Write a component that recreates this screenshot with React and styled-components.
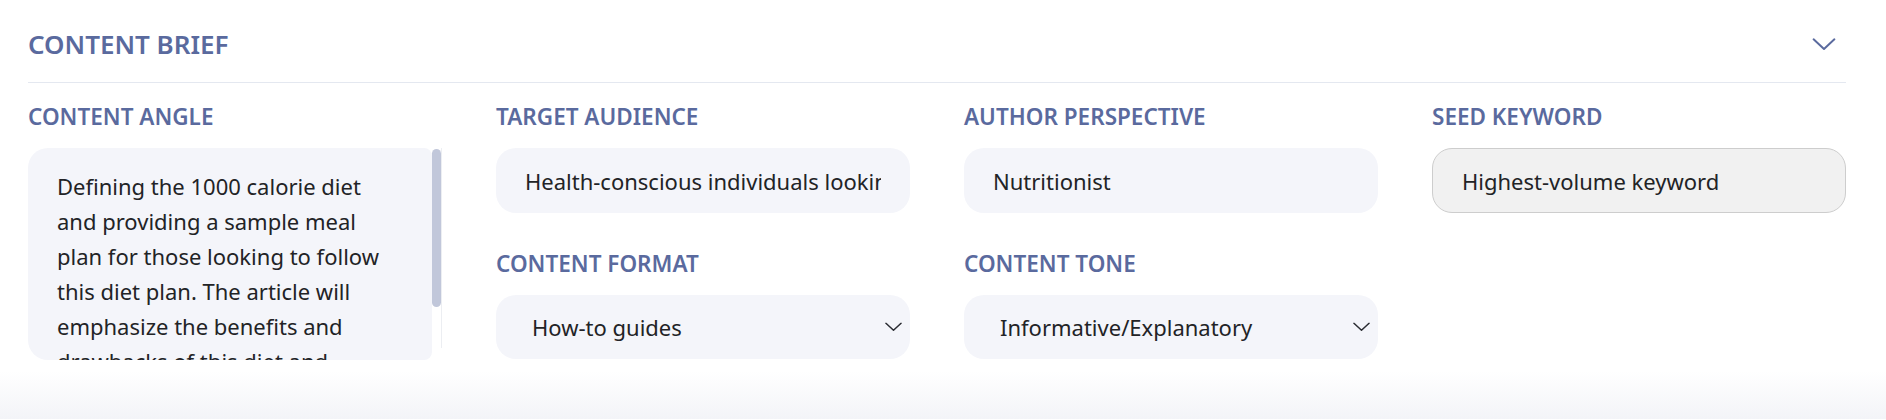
import React from 'react'
import { styled, createGlobalStyle } from 'styled-components'

const GlobalStyle = createGlobalStyle`
  * { box-sizing: border-box; }
  body {
    margin: 0;
    background: #ffffff;
    font-family: "Noto Sans", "Open Sans", sans-serif;
    color: #222326;
  }
`

const angleText =
  'Defining the 1000 calorie diet and providing a sample meal plan for those looking to follow this diet plan. The article will emphasize the benefits and drawbacks of this diet and provide tips for success.'

function Chevron({ size = 17, color = '#2b2d33', stroke = 1.6 }) {
  return (
    <svg width={size} height={size / 2 + 1} viewBox="0 0 18 10" fill="none">
      <path d="M1 1 L9 8.5 L17 1" stroke={color} strokeWidth={stroke} strokeLinecap="round" strokeLinejoin="round" />
    </svg>
  )
}

function SelectField({ label, value, options }) {
  return (
    <Field>
      <Label>{label}</Label>
      <SelectWrap>
        <Select defaultValue={value}>
          {options.map((o) => (
            <option key={o}>{o}</option>
          ))}
        </Select>
        <SelectIcon>
          <Chevron />
        </SelectIcon>
      </SelectWrap>
    </Field>
  )
}

export default function App() {
  return (
    <>
      <GlobalStyle />
      <Card>
        <Header>
          <Title>CONTENT BRIEF</Title>
          <Toggle>
            <Chevron size={24} color="#5a6a9e" stroke={1.5} />
          </Toggle>
        </Header>
        <Grid>
          <Column>
            <Field>
              <Label>CONTENT ANGLE</Label>
              <AngleBox>
                <TextArea readOnly defaultValue={angleText} />
                <ScrollTrack>
                  <ScrollThumb />
                </ScrollTrack>
              </AngleBox>
            </Field>
          </Column>
          <Column>
            <Field>
              <Label>TARGET AUDIENCE</Label>
              <Input readOnly defaultValue="Health-conscious individuals looking to lose weight quickly" />
            </Field>
            <SelectField
              label="CONTENT FORMAT"
              value="How-to guides"
              options={['How-to guides', 'Listicles', 'Case studies']}
            />
          </Column>
          <Column>
            <Field>
              <Label>AUTHOR PERSPECTIVE</Label>
              <Input readOnly defaultValue="Nutritionist" />
            </Field>
            <SelectField
              label="CONTENT TONE"
              value="Informative/Explanatory"
              options={['Informative/Explanatory', 'Conversational', 'Persuasive']}
            />
          </Column>
          <Column>
            <Field>
              <Label>SEED KEYWORD</Label>
              <Input disabled defaultValue="Highest-volume keyword" />
            </Field>
          </Column>
        </Grid>
      </Card>
      <Fade />
    </>
  )
}

const Card = styled.div`
  background: #ffffff;
  padding: 0 40px 11px 28px;
`

const Header = styled.div`
  display: flex;
  justify-content: space-between;
  align-items: center;
  height: 83px;
  padding-top: 6px;
  border-bottom: 1px solid #e4e8f0;
`

const Title = styled.h2`
  margin: 0;
  font-size: 26px;
  font-weight: 600;
  color: #5a6a9e;
`

const Toggle = styled.span`
  display: flex;
  margin-right: 10px;
`

const Grid = styled.div`
  display: grid;
  grid-template-columns: repeat(4, 1fr);
  column-gap: 54px;
  padding-top: 19px;
`

const Column = styled.div`
  display: flex;
  flex-direction: column;
  gap: 36px;
`

const Field = styled.div`
  display: flex;
  flex-direction: column;
  gap: 16px;
`

const Label = styled.label`
  font-size: 22.5px;
  line-height: 30px;
  font-weight: 600;
  color: #5a6a9e;
`

const boxText = `
  font-family: "Noto Sans", "Open Sans", sans-serif;
  font-size: 22px;
  color: #222326;
  background: #f4f5fa;
  border: none;
  outline: none;
  border-radius: 20px;
  width: 100%;
`

const AngleBox = styled.div`
  display: flex;
  height: 212px;
`

const TextArea = styled.textarea`
  ${boxText}
  flex: 1;
  height: 100%;
  padding: 21px 38px 0 29px;
  line-height: 35px;
  resize: none;
  overflow: hidden;
  border-radius: 20px 8px 8px 20px;
`

const ScrollTrack = styled.div`
  width: 10px;
  flex: none;
  padding-top: 1px;
  background: #ffffff;
  border-right: 1px solid #eceef2;
  height: 200px;
`

const ScrollThumb = styled.div`
  width: 9px;
  height: 158px;
  border-radius: 5px;
  background: #c1c7da;
`

const Input = styled.input`
  ${boxText}
  height: 65px;
  padding: 0 29px;

  &:disabled {
    background: #f1f1f1;
    border: 1px solid #cdcdcd;
    color: #222326;
  }
`

const SelectWrap = styled.div`
  position: relative;
`

const Select = styled.select`
  ${boxText}
  appearance: none;
  height: 64px;
  padding: 0 40px 0 36px;
`

const SelectIcon = styled.span`
  position: absolute;
  right: 8px;
  top: 50%;
  transform: translateY(-50%);
  display: flex;
  pointer-events: none;
`

const Fade = styled.div`
  height: 48px;
  background: linear-gradient(#ffffff, #f3f4f8);
`
